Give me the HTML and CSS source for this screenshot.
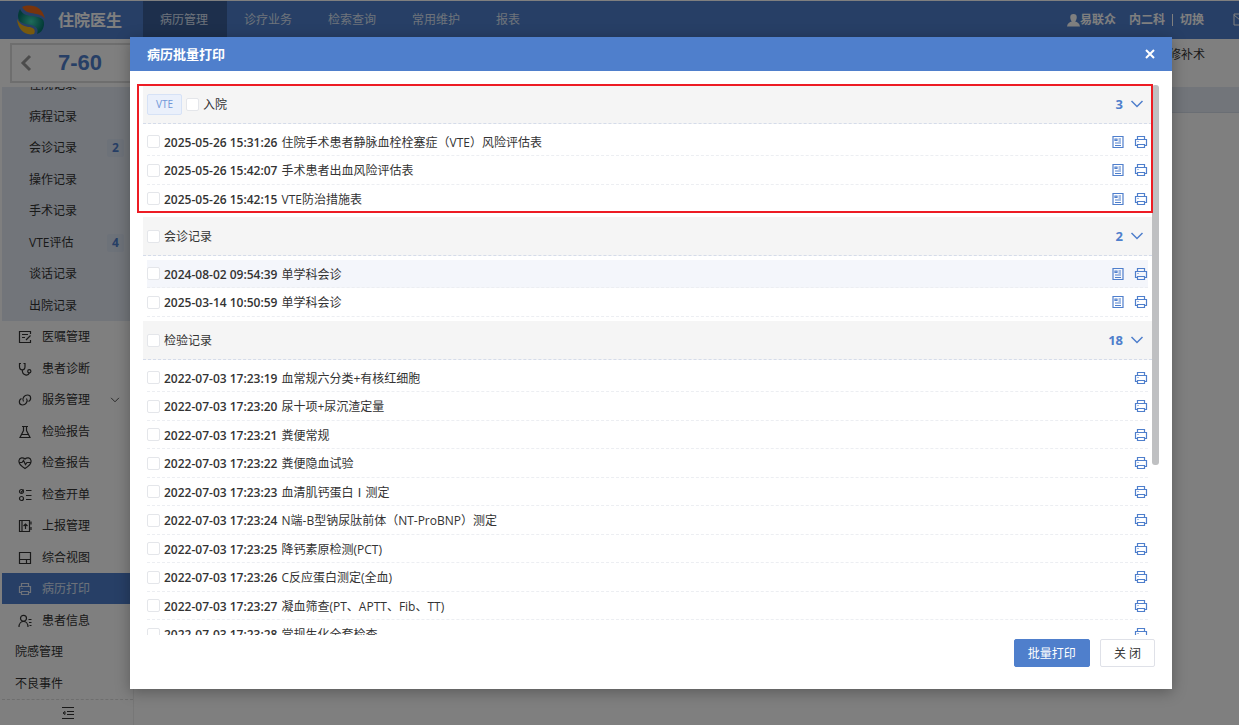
FILE: index.html
```html
<!DOCTYPE html>
<html lang="zh-CN">
<head>
    <meta charset="UTF-8">
    <meta name="viewport" content="width=device-width, initial-scale=1.0">
    <title>住院医生</title>
    <link rel="stylesheet" href="styles.css">
</head>
<body>
    <!-- shared icons -->
    <svg class="icon-defs" aria-hidden="true">
        <symbol id="i-print" viewBox="0 0 14 14"><path d="M3.500 4.500v-3h7v3M3.500 10.500h-2v-6h11v6h-2M3.500 9.500h7v3h-7zM3.500 6.500h1"/></symbol>
        <symbol id="i-doc" viewBox="0 0 14 14"><path d="M2 1.500h10v11H2zM4 4h2v1.500H4zM7.500 4H10M7.500 6H10M4 8h6M4 10.500h6"/></symbol>
        <symbol id="i-down" viewBox="0 0 14 14"><path d="M1.500 4L7 9.500 12.500 4"/></symbol>
    </svg>

    <div class="app">
        <header class="topbar">
            <div class="brand">
                <svg class="logo" viewBox="0 0 30 30">
                    <defs>
                        <radialGradient id="lg"><stop offset="0" stop-color="#3fd8b4"/><stop offset="1" stop-color="#06776f"/></radialGradient>
                    </defs>
                    <path d="M6 2C14-1 26 0 29 14 26 9 20 9 15 8 10 7 8 5 6 2z" fill="#f0691a"/>
                    <path d="M4 4c2 5 7 7 12 7 6 1 13 1 12 9-1 6-4 8-7 9 2-5-1-8-6-9C8 19 2 18 2 11c0-3 1-5 2-7z" fill="url(#lg)"/>
                    <path d="M1 14c3 6 8 8 13 8 4 1 6 3 4 7C9 31 2 25 1 14z" fill="#efb21d"/>
                </svg>
                <span>住院医生</span>
            </div>
            <nav class="nav">
                <a href="#" class="active">病历管理</a>
                <a href="#">诊疗业务</a>
                <a href="#">检索查询</a>
                <a href="#">常用维护</a>
                <a href="#">报表</a>
            </nav>
            <div class="user">
                <span class="user-name"><svg viewBox="0 0 12 12"><path d="M6 0a3 3 0 0 1 3 3c0 2-1 3.500-1.500 4 2 .5 4 1.500 4.500 4.500H0C.5 8.500 2.500 7.500 4.500 7 4 6.500 3 5 3 3a3 3 0 0 1 3-3z"/></svg>易联众</span>
                <span>内二科</span>
                <span class="bar"></span>
                <a href="#">切换</a>
                <svg class="mail" viewBox="0 0 14 14"><path d="M1 1h12v11H1zM1 2l6 5 6-5"/></svg>
            </div>
        </header>

        <div class="patient">
            <div class="bed">
                <svg viewBox="0 0 12 18"><path d="M10 2L3 9l7 7"/></svg>
                <span>7-60</span>
            </div>
            <div class="surgery">修补术</div>
        </div>

        <div class="body">
            <aside class="sidebar">
                <div class="menu">
                    <ul class="sub">
                        <li>住院记录</li>
                        <li>病程记录</li>
                        <li>会诊记录<b>2</b></li>
                        <li>操作记录</li>
                        <li>手术记录</li>
                        <li>VTE评估<b>4</b></li>
                        <li>谈话记录</li>
                        <li>出院记录</li>
                    </ul>
                    <ul class="main">
                        <li><svg viewBox="0 0 14 14"><path d="M12.500 4V1.500h-11v11h11V10M4 4.500h6M4 7.500h3M12.500 5.500L8 10"/></svg>医嘱管理</li>
                        <li><svg viewBox="0 0 14 14"><path d="M3 1.500H1.500v3c0 4.500 5.500 4.500 5.500 0v-3H5.500M4.300 8c0 6 6 6 7 3"/><circle cx="11.300" cy="9.300" r="1.600"/></svg>患者诊断</li>
                        <li><svg viewBox="0 0 14 14"><path d="M8.500 5.500c2 3-1 6.500-4 6.500-4 0-4-5-1-6.500M5.500 8.500c-2-3 1-6.500 4-6.500 4 0 4 5 1 6.500"/></svg>服务管理<svg class="more"><use href="#i-down"/></svg></li>
                        <li><svg viewBox="0 0 14 14"><path d="M4 1.500h6M5.500 1.500v4l-3.500 7h10l-3.500-7v-4M4 9.500h6"/></svg>检验报告</li>
                        <li><svg viewBox="0 0 14 14"><path d="M7 12.500C3 10 .5 7.500 1 4.500 1.500 1.500 5 1 7 3c2-2 5.500-1.500 6 1.500.5 3-2 5.500-6 8zM1 6.500h3l1.500-2 2 4L9 6.500h4"/></svg>检查报告</li>
                        <li><svg viewBox="0 0 14 14"><circle cx="3.500" cy="3.500" r="2"/><circle cx="3.500" cy="10.500" r="2"/><path d="M8 2.500h5.500M8 7.500h5.500M8 11.500h5.500M3 3.500l.5.5 2-2.500"/></svg>检查开单</li>
                        <li><svg viewBox="0 0 14 14"><path d="M1.500 1.500h10v11h-10zM4 1.500v11M7.500 10V5M5.500 7l2-2 2 2M13 2.500v3M13 8v3"/></svg>上报管理</li>
                        <li><svg viewBox="0 0 14 14"><path d="M1.500 1.500h11v11h-11zM1.500 8.500h11M8.500 8.500v4"/></svg>综合视图</li>
                        <li class="active"><svg><use href="#i-print"/></svg>病历打印</li>
                        <li><svg viewBox="0 0 14 14"><circle cx="5.500" cy="4.300" r="3"/><path d="M1 13c0-7.500 9-7.500 9 0M10.500 5.500h3M11 8.500h2.500M11.500 11.500h2"/></svg>患者信息</li>
                        <li class="plain">院感管理</li>
                        <li class="plain">不良事件</li>
                    </ul>
                </div>
                <button class="fold" aria-label="收起">
                    <svg viewBox="0 0 14 14"><path d="M1 1.500h12M6 5.500h7M6 8.500h7M1 12.500h12M4 5.500L2 7l2 1.500z"/></svg>
                </button>
            </aside>
            <main class="content"><div class="strip"></div></main>
        </div>
        <div class="mask"></div>
    </div>

    <div class="modal" role="dialog" aria-labelledby="modal-title">
        <div class="modal-header">
            <h2 id="modal-title">病历批量打印</h2>
            <button class="close" aria-label="关闭"><svg viewBox="0 0 12 12"><path d="M2 2l8 8M10 2l-8 8"/></svg></button>
        </div>
        <div class="modal-body">
            <div class="list" id="list"></div>
            <div class="thumb"></div>
            <div class="highlight"></div>
        </div>
        <div class="modal-footer">
            <button class="btn primary">批量打印</button>
            <button class="btn">关 闭</button>
        </div>
    </div>

    <script src="script.js"></script>
</body>
</html>
```

FILE: styles.css
```css
* {
    box-sizing: border-box;
}
body {
    margin: 0;
    height: 100vh;
    position: relative;
    overflow: hidden;
    background: #fff;
    color: #333;
    font-family: "Open Sans", "Noto Sans CJK SC", sans-serif;
    font-size: 12px;
    line-height: 18px;
}
ul {
    list-style: none;
    margin: 0;
    padding: 0;
}
a {
    color: inherit;
    text-decoration: none;
}
button {
    font: inherit;
    color: inherit;
    padding: 0;
    border: 0;
    background: none;
}
svg {
    fill: none;
    stroke: currentColor;
    flex: none;
}
.icon-defs {
    position: absolute;
    width: 0;
    height: 0;
}

/* page behind the dialog */
.app {
    position: relative;
    display: flex;
    flex-direction: column;
    height: calc(100vh - 1px);
    margin-right: 2px;
    padding-top: 1px;
    background: #fff;
}
.mask {
    position: absolute;
    inset: 0;
    background: rgba(0, 0, 0, 0.5);
}
.topbar {
    display: flex;
    flex: none;
    height: 38px;
    background: #4f7fcc;
    color: #fff;
}
.brand {
    display: flex;
    align-items: center;
    gap: 12px;
    width: 143px;
    padding-left: 16px;
    font-size: 16px;
    font-weight: bold;
}
.logo {
    width: 30px;
    height: 30px;
    stroke: none;
}
.nav {
    display: flex;
}
.nav a {
    padding: 0 19px 0 17px;
    line-height: 38px;
    color: #dce5f5;
}
.nav .active {
    background: #3b5f99;
}
.user {
    display: flex;
    align-items: center;
    gap: 7px;
    margin-left: auto;
    font-weight: bold;
    overflow: hidden;
}
.user-name {
    display: flex;
    align-items: center;
    margin-right: 6px;
}
.user-name svg {
    width: 13px;
    height: 13px;
    fill: #fff;
    stroke: none;
}
.bar {
    width: 1px;
    height: 12px;
    background: #fff;
}
.mail {
    width: 14px;
    height: 14px;
    margin: 0 -8px 0 22px;
}
.patient {
    display: flex;
    flex: none;
    justify-content: space-between;
    height: 48px;
    padding: 4px 34px 4px 10px;
}
.bed {
    display: flex;
    align-items: center;
    gap: 26px;
    width: 180px;
    height: 40px;
    padding-left: 8px;
    border: 2px solid #ddd;
    color: #4f7fcc;
    font: bold 22px "Liberation Sans", Arial, sans-serif;
}
.bed svg {
    width: 12px;
    height: 18px;
    stroke: #999;
    stroke-width: 3;
}
.surgery {
    padding-top: 3px;
}
.body {
    display: flex;
    flex: 1;
    min-height: 0;
}
.sidebar {
    display: flex;
    flex-direction: column;
    width: 134px;
    padding-left: 2px;
    border-right: 1px solid #eee;
}
.menu {
    display: flex;
    flex-direction: column;
    justify-content: flex-end;
    flex: 1;
    min-height: 0;
    overflow: hidden;
}
.menu li {
    display: flex;
    flex: none;
    align-items: center;
    height: 31px;
    padding-top: 1px;
}
.menu li:nth-child(even) {
    height: 32px;
}
.sub {
    background: #e5ebf5;
}
.sub li {
    padding-left: 27px;
    padding-right: 9px;
}
.sub b {
    width: 17px;
    margin-left: auto;
    border-radius: 2px;
    background: #dbe4f3;
    color: #4f7fcc;
    text-align: center;
}
.main li {
    gap: 10px;
    padding-left: 16px;
}
.main svg {
    width: 14px;
    height: 14px;
    stroke-width: 1.2;
}
.main .more {
    width: 10px;
    height: 10px;
    margin: 0 13px 0 auto;
}
.main .plain {
    padding-left: 13px;
}
.main .active {
    background: #4f7fcc;
    color: #dce5f5;
}
.fold {
    flex: none;
    height: 26px;
    border-top: 1px dashed #ddd;
    line-height: 0;
}
.fold svg {
    width: 14px;
    height: 14px;
}
.content {
    flex: 1;
}
.strip {
    height: 26px;
    border-bottom: 1px solid #d5dce8;
    background: #e5ebf5;
}

/* dialog */
.modal {
    position: absolute;
    top: 37px;
    bottom: 37px;
    left: 130px;
    right: 69px;
    display: flex;
    flex-direction: column;
    background: #fff;
    box-shadow: 0 3px 14px rgba(0, 0, 0, 0.3);
}
.modal-header {
    display: flex;
    flex: none;
    align-items: center;
    justify-content: space-between;
    height: 34px;
    padding: 0 16px 0 17px;
    background: #4f7fcc;
    color: #fff;
}
.modal-header h2 {
    margin: 0;
    font-size: 13px;
}
.close {
    width: 12px;
    height: 12px;
    line-height: 0;
}
.close svg {
    width: 12px;
    height: 12px;
    stroke-width: 2;
}
.modal-body {
    position: relative;
    flex: 1;
    min-height: 0;
    margin: 14px 13px 0;
}
.list {
    height: 100%;
    margin-right: 7px;
    overflow: hidden;
}
.thumb {
    position: absolute;
    top: 0;
    right: 0;
    width: 7px;
    height: 380px;
    border-radius: 3px;
    background: #bfc0c2;
}
.highlight {
    position: absolute;
    top: -1px;
    left: -6px;
    right: 6px;
    height: 129px;
    border: 2px solid #ed1c24;
    pointer-events: none;
}
.group-head {
    display: flex;
    align-items: center;
    height: 39px;
    padding: 0 8px 0 4px;
    border-bottom: 1px dashed #d5dcea;
    background: #f5f5f5;
}
.group-head .count {
    margin-left: auto;
    color: #4f7fcc;
    font-size: 13px;
    font-weight: bold;
}
.group-head svg {
    width: 14px;
    height: 14px;
    margin-left: 7px;
    color: #4f7fcc;
    stroke-width: 1.5;
}
.tag {
    width: 35px;
    margin-right: 4px;
    border: 1px solid #d6e2f6;
    border-radius: 2px;
    background: #eaf0fb;
    color: #6f97d8;
    font-size: 10px;
    line-height: 19px;
    text-align: center;
}
label {
    display: flex;
    align-items: center;
    gap: 4px;
}
label span {
    padding-top: 2px;
}
label time {
    margin-right: 4px;
    font-weight: 600;
}
input[type="checkbox"] {
    appearance: none;
    width: 13px;
    height: 13px;
    margin: 0;
    border: 1px solid #e4e6ea;
    border-radius: 2px;
    background: #fff;
}
.rows {
    padding: 4px;
}
.row {
    display: flex;
    align-items: center;
    height: 28px;
    border-bottom: 1px dashed #eceef2;
}
.row:nth-child(even) {
    height: 29px;
}
.row.hover {
    background: #f4f6fb;
}
.row label {
    margin-right: auto;
}
.row button {
    height: 14px;
    margin-left: 9px;
    color: #4f7fcc;
    line-height: 0;
}
.row svg {
    width: 14px;
    height: 14px;
    stroke-width: 1.2;
}
.modal-footer {
    display: flex;
    flex: none;
    justify-content: flex-end;
    gap: 10px;
    padding: 4px 17px 22px;
}
.btn {
    height: 28px;
    padding: 2px 13px 0;
    border: 1px solid #dfe1e8;
    border-radius: 2px;
    background: #fff;
}
.btn.primary {
    border-color: #4f7fcc;
    background: #4f7fcc;
    color: #fff;
}
```

FILE: script.js
```js
var groups = [
    { name: '入院', tag: 'VTE', count: 3, doc: true, rows: [
        ['2025-05-26 15:31:26', '住院手术患者静脉血栓栓塞症（VTE）风险评估表'],
        ['2025-05-26 15:42:07', '手术患者出血风险评估表'],
        ['2025-05-26 15:42:15', 'VTE防治措施表']
    ] },
    { name: '会诊记录', count: 2, doc: true, hover: 0, rows: [
        ['2024-08-02 09:54:39', '单学科会诊'],
        ['2025-03-14 10:50:59', '单学科会诊']
    ] },
    { name: '检验记录', count: 18, rows: [
        ['2022-07-03 17:23:19', '血常规六分类+有核红细胞'],
        ['2022-07-03 17:23:20', '尿十项+尿沉渣定量'],
        ['2022-07-03 17:23:21', '粪便常规'],
        ['2022-07-03 17:23:22', '粪便隐血试验'],
        ['2022-07-03 17:23:23', '血清肌钙蛋白Ⅰ测定'],
        ['2022-07-03 17:23:24', 'N端-B型钠尿肽前体（NT-ProBNP）测定'],
        ['2022-07-03 17:23:25', '降钙素原检测(PCT)'],
        ['2022-07-03 17:23:26', 'C反应蛋白测定(全血)'],
        ['2022-07-03 17:23:27', '凝血筛查(PT、APTT、Fib、TT)'],
        ['2022-07-03 17:23:28', '常规生化全套检查']
    ] }
];

function iconButton(icon, title) {
    return '<button aria-label="' + title + '"><svg><use href="#' + icon + '"/></svg></button>';
}

function renderGroup(group) {
    var html = '<section><div class="group-head">';
    if (group.tag) {
        html += '<span class="tag">' + group.tag + '</span>';
    }
    html += '<label><input type="checkbox"><span>' + group.name + '</span></label>';
    html += '<span class="count">' + group.count + '</span><svg><use href="#i-down"/></svg></div><div class="rows">';
    group.rows.forEach(function (row, i) {
        html += '<div class="row' + (group.hover === i ? ' hover' : '') + '">';
        html += '<label><input type="checkbox"><span><time>' + row[0] + '</time>' + row[1] + '</span></label>';
        html += (group.doc ? iconButton('i-doc', '查看') : '') + iconButton('i-print', '打印') + '</div>';
    });
    return html + '</div></section>';
}

document.getElementById('list').innerHTML = groups.map(renderGroup).join('');
```
